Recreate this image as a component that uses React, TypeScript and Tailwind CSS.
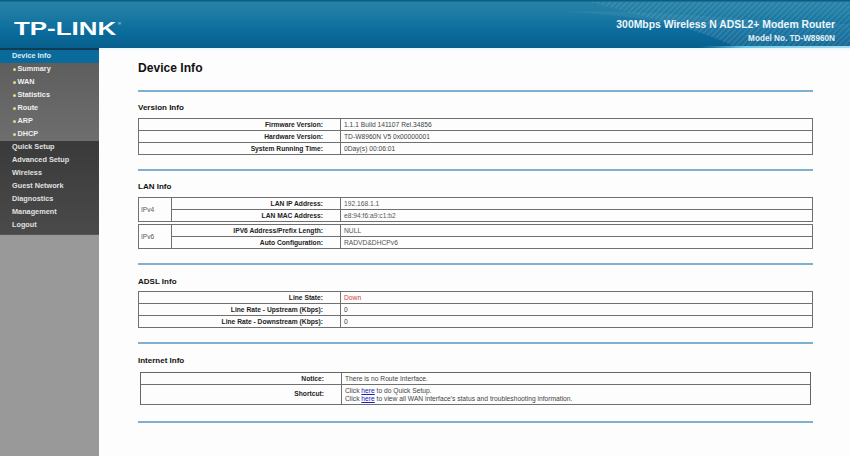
import React from "react";

const FONT = { fontFamily: '"Liberation Sans", Arial, sans-serif' };

function Rule() {
  return <div className="h-[2px] w-[675px] bg-[#7fb0d0]" />;
}

function Heading({ children }: { children: React.ReactNode }) {
  return <div className="h-[12px] pt-[1px] text-[8px] leading-[12px] font-bold text-[#111]">{children}</div>;
}

function Row({ label, children, tall = false, narrow = false }: { label: string; children: React.ReactNode; tall?: boolean; narrow?: boolean }) {
  return (
    <div className={`flex border-b border-[#707070] ${tall ? "h-[20px]" : "h-[12px]"}`}>
      <div className={`flex items-center justify-end flex-1 pr-[17px] text-[6.7px] font-bold text-[#222] border-r border-[#707070] ${tall ? "" : "pt-[1px]"}`}>{label}</div>
      <div className={`flex flex-col justify-center pl-[3px] text-[6.7px] leading-[8px] text-[#444] ${narrow ? "w-[468px]" : "w-[471px]"} ${tall ? "" : "pt-[1px]"}`}>{children}</div>
    </div>
  );
}

function Grouped({ name, rows }: { name: string; rows: [string, string][] }) {
  return (
    <div className="flex border-t border-x border-[#707070] w-[675px]">
      <div className="flex items-center w-[33px] pl-[2px] text-[6.5px] text-[#555] border-r border-b border-[#707070]">{name}</div>
      <div className="flex-1">
        {rows.map(([l, v]) => (
          <Row key={l} label={l}><span className="text-[#555]">{v}</span></Row>
        ))}
      </div>
    </div>
  );
}

const subItems = ["Summary", "WAN", "Statistics", "Route", "ARP", "DHCP"];
const mainItems = ["Quick Setup", "Advanced Setup", "Wireless", "Guest Network", "Diagnostics", "Management", "Logout"];

export default function App() {
  return (
    <div className="w-[850px] h-[456px] overflow-hidden flex flex-col bg-[#fdfdfd]" style={FONT}>
      <header className="relative h-[48px] shrink-0 overflow-hidden bg-[#0a6a9b] flex justify-between">
        <svg className="absolute inset-0" width="850" height="48" viewBox="0 0 850 48">
          <defs>
            <pattern id="hatch" width="4" height="4" patternUnits="userSpaceOnUse" patternTransform="rotate(45)">
              <rect width="2" height="4" fill="#ffffff" opacity="0.09" />
            </pattern>
            <linearGradient id="top" x1="0" y1="0" x2="0" y2="1">
              <stop offset="0" stopColor="#2a83a8" />
              <stop offset="0.3" stopColor="#1c7ba3" />
              <stop offset="0.65" stopColor="#0b6c9d" />
              <stop offset="1" stopColor="#075f8c" />
            </linearGradient>
            <linearGradient id="edge" x1="0" y1="0" x2="1" y2="0">
              <stop offset="0" stopColor="#5db9dc" stopOpacity="0" />
              <stop offset="0.3" stopColor="#6cc8e8" />
              <stop offset="1" stopColor="#a8dcee" />
            </linearGradient>
          </defs>
          <rect width="850" height="48" fill="url(#top)" />
          <rect width="850" height="1.5" fill="#0b5f86" />
          <path d="M590 2 C 650 18, 700 30, 735 47 L850 47 L850 2 Z" fill="url(#hatch)" />
          <path d="M560 12 C 640 14, 700 28, 735 47 L850 47 L850 24 C 760 24, 660 8, 560 12 Z" fill="#ffffff" opacity="0.06" />
          <rect x="700" y="46" width="150" height="2" fill="url(#edge)" />
        </svg>
        <div className="relative pl-[14px] pt-[20px] flex items-start">
          <span className="origin-left inline-block scale-x-[1.44] text-[18px] leading-[18px] font-bold text-white">TP-LINK</span>
          <span className="absolute left-[118px] top-[21px] text-[4px] leading-[5px] text-white">®</span>
        </div>
        <div className="relative flex flex-col items-end pr-[15px] pt-[18px] text-white font-bold">
          <div className="text-[10.4px] leading-[14px] text-[#eef6fa]">300Mbps Wireless N ADSL2+ Modem Router</div>
          <div className="text-[8.2px] leading-[12px] mt-[1px] text-[#e4f0f6]">Model No. TD-W8960N</div>
        </div>
      </header>
      <div className="h-[2px] shrink-0 flex">
        <div className="w-[99px] bg-[#123a50]" />
        <div className="flex-1 bg-[#eef7fb]" />
      </div>
      <div className="flex flex-1 min-h-0">
        <aside className="w-[99px] shrink-0 bg-[#999999] flex flex-col">
          <div className="h-[13px] bg-[#0a6a9b] pl-[12px] flex items-center text-[7.3px] font-bold text-[#dfeef6]">Device Info</div>
          <div className="h-[78px] bg-gradient-to-b from-[#5e5e5e] to-[#6e6e6e] flex flex-col">
            {subItems.map((s) => (
              <div key={s} className="h-[13px] shrink-0 flex items-center pl-[13px] text-[7.3px] font-bold text-[#f0f0f0]">
                <span className="w-[2.5px] h-[2.5px] mr-[2px] bg-[#e6d98a] rounded-full" />
                {s}
              </div>
            ))}
          </div>
          <div className="bg-gradient-to-b from-[#3a3a3a] to-[#4a4a4a] flex flex-col pb-[2px] border-b border-[#555]">
            {mainItems.map((s) => (
              <div key={s} className="h-[13px] flex items-center pl-[12px] text-[7.3px] font-bold text-[#e0e0e0]">{s}</div>
            ))}
          </div>
        </aside>
        <main className="flex-1 pl-[39px] flex flex-col text-[#222]">
          <h1 className="mt-[10px] h-[16px] text-[12.1px] leading-[17px] font-bold text-[#111]">Device Info</h1>
          <div className="mt-[14px]"><Rule /></div>
          <div className="mt-[9px]"><Heading>Version Info</Heading></div>
          <div className="mt-[5px] w-[675px] border-t border-x border-[#707070]">
            <Row label="Firmware Version:">1.1.1 Build 141107 Rel.34856</Row>
            <Row label="Hardware Version:">TD-W8960N V5 0x00000001</Row>
            <Row label="System Running Time:">0Day(s) 00:06:01</Row>
          </div>
          <div className="mt-[14px]"><Rule /></div>
          <div className="mt-[9px]"><Heading>LAN Info</Heading></div>
          <div className="mt-[5px] flex flex-col gap-[2px]">
            <Grouped name="IPv4" rows={[["LAN IP Address:", "192.168.1.1"], ["LAN MAC Address:", "e8:94:f6:a9:c1:b2"]]} />
            <Grouped name="IPv6" rows={[["IPV6 Address/Prefix Length:", "NULL"], ["Auto Configuration:", "RADVD&DHCPv6"]]} />
          </div>
          <div className="mt-[14px]"><Rule /></div>
          <div className="mt-[10px]"><Heading>ADSL Info</Heading></div>
          <div className="mt-[4px] w-[675px] border-t border-x border-[#707070]">
            <Row label="Line State:"><span className="text-[#d04040]">Down</span></Row>
            <Row label="Line Rate - Upstream (Kbps):">0</Row>
            <Row label="Line Rate - Downstream (Kbps):">0</Row>
          </div>
          <div className="mt-[14px]"><Rule /></div>
          <div className="mt-[10px]"><Heading>Internet Info</Heading></div>
          <div className="mt-[6px] ml-[2px] w-[671px] border-t border-x border-[#666]">
            <Row narrow label="Notice:">There is no Route Interface.</Row>
            <Row narrow tall label="Shortcut:">
              <div>Click <a className="text-[#2222bb] underline">here</a> to do Quick Setup.</div>
              <div>Click <a className="text-[#2222bb] underline">here</a> to view all WAN interface's status and troubleshooting information.</div>
            </Row>
          </div>
          <div className="mt-[16px]"><Rule /></div>
        </main>
      </div>
    </div>
  );
}
